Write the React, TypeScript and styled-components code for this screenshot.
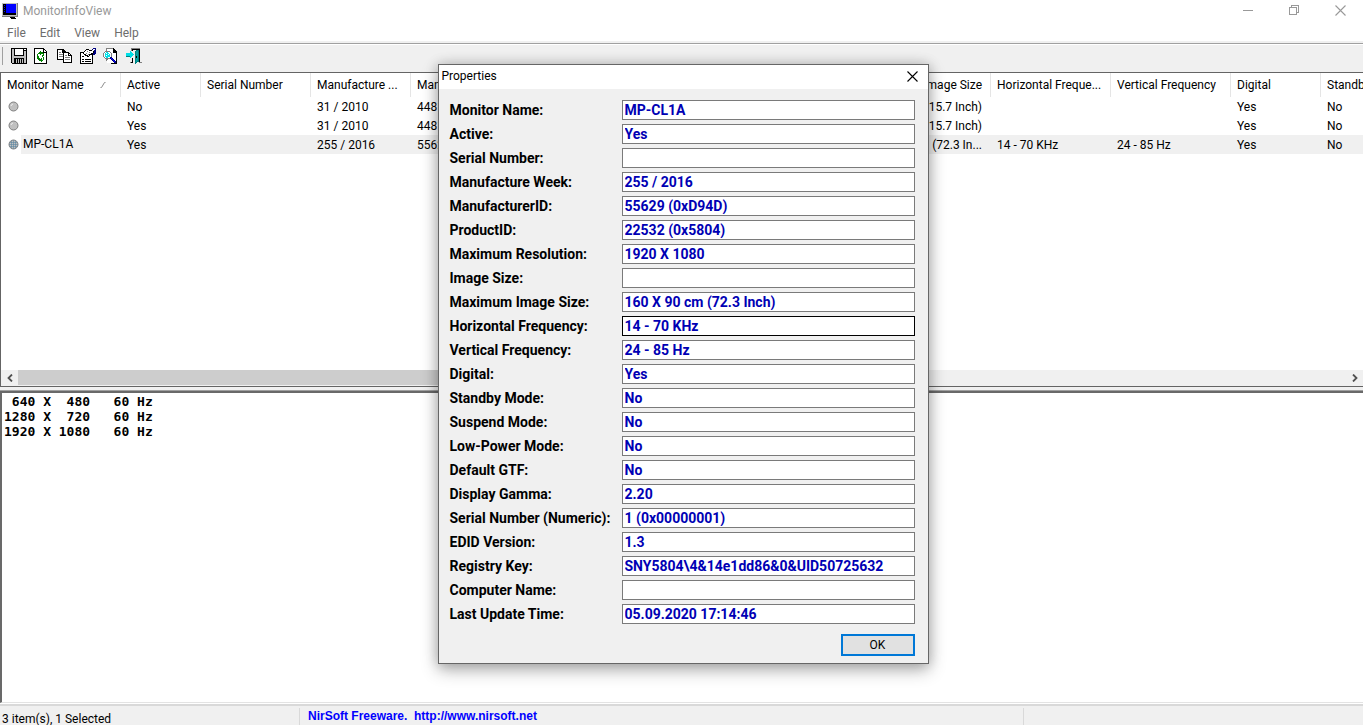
import React from "react";
import styled, { createGlobalStyle } from "styled-components";

const GlobalStyle = createGlobalStyle`
  * { box-sizing: border-box; }
  html, body { margin: 0; height: 100%; }
  #root { height: 100%; }
  body {
    overflow: hidden;
    font-family: Roboto, "Noto Sans", sans-serif;
    font-size: 12px;
    color: #000;
    background: #f0f0f0;
  }
  button, input, textarea { font: inherit; color: inherit; border-radius: 0; }
`;

const Window = styled.div`
  position: relative;
  display: flex;
  flex-direction: column;
  height: 100vh;
  overflow: hidden;
`;

const TitleBar = styled.header`
  display: flex;
  align-items: center;
  height: 22px;
  padding-left: 2px;
  background: #fff;
  color: #999;
`;

const WindowTitle = styled.h1`
  flex: 1;
  margin: 0 0 0 5px;
  font-size: 12px;
  font-weight: 400;
`;

const CaptionButton = styled.button`
  display: grid;
  place-items: center;
  width: 46px;
  height: 20px;
  padding: 0;
  border: 0;
  background: none;
  align-self: flex-start;
`;

const MenuBar = styled.nav`
  display: flex;
  height: 22px;
  background: #fff;
  border-bottom: 1px solid #a0a0a0;
  box-shadow: inset 0 -2px #f0f0f0;
`;

const MenuItem = styled.button`
  padding: 0 7px;
  height: 21px;
  border: 0;
  background: none;
  color: #6d6d6d;
`;

const ToolBar = styled.div`
  display: flex;
  align-items: flex-start;
  height: 28px;
  padding: 0 2px;
  border-top: 1px solid #fff;
  background: #f0f0f0;
`;

const Grip = styled.span`
  width: 1px;
  height: 18px;
  margin: 2px 4px 0 0;
  background: #a0a0a0;
`;

const ToolButton = styled.button`
  display: grid;
  place-items: center;
  width: 23px;
  height: 22px;
  padding: 0;
  border: 0;
  background: none;
`;

const ListPane = styled.section`
  display: flex;
  flex-direction: column;
  height: 315px;
  flex-shrink: 0;
  overflow: hidden;
  background: #fff;
  border: 1px solid #646464;
  border-right: 0;
`;

const ListViewport = styled.div`
  flex: 1;
  overflow: hidden;
`;

const ListTable = styled.table`
  table-layout: fixed;
  width: 1409px;
  border-collapse: separate;
  border-spacing: 0;
`;

const HeadCell = styled.th<{ $end?: boolean }>`
  height: 24px;
  padding: 0 ${(p) => (p.$end ? 8 : 0)}px 0 6px;
  border-right: 1px solid #e5e5e5;
  font-weight: 400;
  text-align: ${(p) => (p.$end ? "right" : "left")};
  white-space: nowrap;
  overflow: hidden;
`;

const HeadContent = styled.span`
  display: flex;
  align-items: center;
  justify-content: space-between;
  padding-right: 14px;
`;

const Cell = styled.td<{ $selected: boolean; $end: boolean }>`
  height: 19px;
  padding: 0 ${(p) => (p.$end ? 9 : 0)}px 0 6px;
  text-align: ${(p) => (p.$end ? "right" : "left")};
  white-space: nowrap;
  overflow: hidden;
  background: ${(p) => (p.$selected ? "#f0f0f0" : "#fff")};
`;

const NameCell = styled.td`
  height: 19px;
  padding: 0;
`;

const NameContent = styled.div`
  display: flex;
  align-items: center;
  padding-left: 7px;
`;

const NameText = styled.span<{ $selected: boolean }>`
  flex: 1;
  height: 19px;
  line-height: 19px;
  margin-left: 2px;
  padding-left: 2px;
  background: ${(p) => (p.$selected ? "#f0f0f0" : "#fff")};
`;

const ScrollBar = styled.div`
  display: flex;
  height: 16px;
  background: #f0f0f0;
`;

const ScrollArrow = styled.button`
  display: grid;
  place-items: center;
  width: 17px;
  height: 15px;
  padding: 0;
  border: 0;
  background: none;
`;

const ScrollTrack = styled.div`
  flex: 1;
`;

const ScrollThumb = styled.div`
  width: 60%;
  height: 15px;
  background: #cdcdcd;
`;

const Splitter = styled.div`
  height: 4px;
  flex-shrink: 0;
  background: #f0f0f0;
`;

const ModesPane = styled.textarea`
  flex: 1;
  display: block;
  width: 100%;
  min-height: 0;
  margin: 0;
  padding: 1px 2px 0;
  border: solid;
  border-width: 2px 0 1px 2px;
  border-color: #696969 #e3e3e3 #e3e3e3 #696969;
  box-shadow: 0 -1px #a0a0a0;
  outline: 0;
  resize: none;
  overflow: hidden;
  background: #fff;
  font-family: "DejaVu Sans Mono", monospace;
  font-size: 13px;
  font-weight: 700;
  line-height: 15px;
`;

const StatusBar = styled.footer`
  display: flex;
  height: 22px;
  flex-shrink: 0;
  padding-top: 1px;
  border-top: 1px solid #fff;
  background: #f0f0f0;
  box-shadow: inset 0 2px #d9d9d9;
`;

const StatusPart = styled.div<{ $width?: number }>`
  flex: ${(p) => (p.$width ? `0 0 ${p.$width}px` : "1")};
  margin-top: 3px;
  padding: 2px 2px 0;
  line-height: 18px;
  border-right: 1px solid #d9d9d9;
  white-space: pre;
  &:last-child { border-right: 0; }
`;

const HomeLink = styled.a`
  display: block;
  padding-left: 6px;
  line-height: 12px;
  color: #0000ff;
  font-family: "Liberation Sans", Arial, sans-serif;
  font-size: 12px;
  font-weight: 700;
  text-decoration: none;
`;

const DialogLayer = styled.div`
  position: absolute;
  inset: 0;
  display: grid;
  place-items: center;
  padding: 3px 0 0 3px;
`;

const Dialog = styled.form`
  width: 491px;
  background: #f0f0f0;
  border: 1px solid #666;
  box-shadow: 0 6px 16px rgba(0, 0, 0, 0.3), 0 0 12px rgba(0, 0, 0, 0.18);
`;

const DialogTitle = styled.div`
  display: flex;
  align-items: center;
  justify-content: space-between;
  height: 24px;
  padding: 0 0 2px 3px;
  background: #fff;
`;

const DialogClose = styled.button`
  display: grid;
  place-items: center;
  width: 30px;
  height: 22px;
  padding: 0;
  border: 0;
  background: none;
`;

const DialogBody = styled.div`
  display: flex;
  flex-direction: column;
  gap: 4px;
  padding: 11px 13px 7px 11px;
`;

const Field = styled.label`
  display: grid;
  grid-template-columns: 172px 1fr;
  align-items: center;
  height: 20px;
  font-family: Roboto, "Liberation Sans", sans-serif;
  font-size: 14px;
  font-weight: 700;
  white-space: nowrap;
`;

const FieldInput = styled.input<{ $current: boolean }>`
  width: 100%;
  height: 20px;
  padding: 0 2px;
  border: 1px solid ${(p) => (p.$current ? "#000" : "#7a7a7a")};
  outline: 0;
  background: #fff;
  color: #0000b4;
`;

const OkButton = styled.button`
  align-self: flex-end;
  width: 74px;
  height: 22px;
  margin-top: 6px;
  padding: 0;
  border: 2px solid #0078d7;
  background: #e1e1e1;
  font-family: Roboto, "Liberation Sans", sans-serif;
  font-size: 12px;
`;

const columns = [
  { title: "Monitor Name", width: 120 },
  { title: "Active", width: 80 },
  { title: "Serial Number", width: 110 },
  { title: "Manufacture ...", width: 100 },
  { title: "Man", width: 120 },
  { title: "", width: 340 },
  { title: "mage Size", width: 120 },
  { title: "Horizontal Freque...", width: 120 },
  { title: "Vertical Frequency", width: 120 },
  { title: "Digital", width: 90 },
  { title: "Standb", width: 89 },
];

const SIZE_COLUMN = 6;

const monitors = [
  { name: "", cells: ["No", "", "31 / 2010", "4481", "", "(15.7 Inch)", "", "", "Yes", "No"] },
  { name: "", cells: ["Yes", "", "31 / 2010", "4481", "", "(15.7 Inch)", "", "", "Yes", "No"] },
  {
    name: "MP-CL1A",
    cells: ["Yes", "", "255 / 2016", "5562", "", "(72.3 In...", "14 - 70 KHz", "24 - 85 Hz", "Yes", "No"],
  },
];

const fields: [string, string][] = [
  ["Monitor Name:", "MP-CL1A"],
  ["Active:", "Yes"],
  ["Serial Number:", ""],
  ["Manufacture Week:", "255 / 2016"],
  ["ManufacturerID:", "55629 (0xD94D)"],
  ["ProductID:", "22532 (0x5804)"],
  ["Maximum Resolution:", "1920 X 1080"],
  ["Image Size:", ""],
  ["Maximum Image Size:", "160 X 90 cm (72.3 Inch)"],
  ["Horizontal Frequency:", "14 - 70 KHz"],
  ["Vertical Frequency:", "24 - 85 Hz"],
  ["Digital:", "Yes"],
  ["Standby Mode:", "No"],
  ["Suspend Mode:", "No"],
  ["Low-Power Mode:", "No"],
  ["Default GTF:", "No"],
  ["Display Gamma:", "2.20"],
  ["Serial Number (Numeric):", "1 (0x00000001)"],
  ["EDID Version:", "1.3"],
  ["Registry Key:", "SNY5804\\4&14e1dd86&0&UID50725632"],
  ["Computer Name:", ""],
  ["Last Update Time:", "05.09.2020 17:14:46"],
];

const modes = " 640 X  480   60 Hz\n1280 X  720   60 Hz\n1920 X 1080   60 Hz";

const Icon = ({ children, size = 16 }: { children: React.ReactNode; size?: number }) => (
  <svg width={size} height={size} viewBox={`0 0 ${size} ${size}`} shapeRendering="crispEdges" aria-hidden="true">
    {children}
  </svg>
);

const AppIcon = () => (
  <Icon>
    <path fill="#c0c0c0" d="M0 0h16v14H0z" />
    <path fill="#808080" d="M15 0h1v14H0v-1h15z" />
    <path fill="#000" d="M1 1h13v11H1zM9 14h4v1h1v1H9zM8 14h1v1H8z" />
    <path fill="#0000ff" d="M4 1h10v9H4zM2 2h1v1H2zM2 4h1v1H2zM2 6h1v1H2zM2 8h1v1H2z" />
  </Icon>
);

const SaveIcon = () => (
  <Icon>
    <path fill="#000" d="M0 0h16v16H1v-1H0z" />
    <path fill="#c0c0c0" d="M1 1h2v7h10V3h2v12h-2v-5H3v5H1z" />
    <path fill="#fff" d="M4 1h8v6H4zM13 1h2v1h-2z" />
    <path fill="#c0c0c0" d="M5 11h7v4H5z" />
    <path fill="#000" d="M6 11h1v4H6zM8 11h1v4H8zM10 11h1v4h-1z" />
  </Icon>
);

const RefreshIcon = () => (
  <Icon>
    <path fill="#000" d="M0 0h10v1h1v1h1v1h1v13H0z" />
    <path fill="#fff" d="M1 1h8v4h3v10H1z" />
    <path fill="#fff" d="M10 2v2h2V3h-1V2z" />
    <path
      fill="#008000"
      d="M6 3h1v1h2v1h1v3H9v1H8V7h1V6H7v1H6V6H5V4h1zM4 5h1v1H4zM3 6h1v3H3zM9 9h1v3H9zM8 12h1v1H8zM4 8h1v2h1v1h1v-1h1v4H7v-1H5v-1H4v-1H3V9h1z"
    />
  </Icon>
);

const CopyIcon = () => (
  <Icon>
    <path fill="#000" d="M0 1h6l3 3v8H0z" />
    <path fill="#fff" d="M1 2h4v3h3v6H1z" />
    <path fill="#808080" d="M2 4h2v1H2zM2 6h4v1H2zM2 8h4v1H2z" />
    <path fill="#000" d="M6 4h6v1h1v1h1v1h1v8H6z" />
    <path fill="#fff" d="M7 5h4v3h3v6H7z" />
    <path fill="#fff" d="M12 6v1h1V6z" />
    <path fill="#808080" d="M8 7h2v1H8zM8 9h5v1H8zM8 11h5v1H8z" />
  </Icon>
);

const PropertiesIcon = () => (
  <Icon>
    <path fill="#000" d="M0 4h13v12H0z" />
    <path fill="#fff" d="M1 5h11v10H1z" />
    <path fill="#000" d="M2 8h2v1H2zM2 11h2v1H2zM5 11h6v1H5zM2 13h2v1H2zM5 13h6v1H5z" />
    <path fill="#000" d="M6 1h3v1h3v1h2v3h-2v1h-2v1H9v1H7V8H5V7H4V6H3V4h1V3h1V2h1z" />
    <path fill="#fff" d="M6 2h3v1h4v2h-2v1H9v2H8V7H6V6H4V4h1V3h1z" />
    <path fill="#808080" d="M7 3h1v1H7zM9 4h1v1H9zM6 5h1v1H6zM8 6h1v1H8z" />
    <path fill="#000080" d="M12 1h1V0h3v6h-1v1h-2V5h1V2h-2z" />
    <path fill="#fff" d="M13 1h2v1h-2z" />
  </Icon>
);

const FindIcon = () => (
  <Icon>
    <path fill="#808080" d="M3 0h8v1H4v12H3z" />
    <path fill="#fff" d="M4 1h7v3h3v11H4z" />
    <path fill="#000" d="M10 0h1v1h1v1h1v1h1v13H8v-1h5V5h-3z" />
    <circle cx="4.5" cy="7" r="4" fill="#fff" stroke="#808080" />
    <path fill="#00e0e8" d="M3 4h2v1h1v1h1v3H5v1H3V9H2V5h1z" />
    <path fill="#fff" d="M3 5h1v1H3zM5 6h1v1H5zM3 7h1v1H3z" />
    <path fill="#000080" d="M7 9h2v1h1v1h1v1h1v1h1v2h-2v-1h-1v-1H9v-1H8v-1H7z" />
    <path fill="#0000ff" d="M8 10h1v1h1v1h1v1h1v1h-1v-1h-1v-1H9v-1H8z" />
  </Icon>
);

const ExitIcon = () => (
  <Icon>
    <path fill="#808080" d="M5 0h9v14h2v1h-3V1H6v2H5zM4 14h2v1H4z" />
    <path fill="#000" d="M6 1h8v13h-1V2H7v1H6zM6 10h1v5H5v-1h1z" />
    <path fill="#008080" d="M9 3h1V2h3v12h-2v1h-1v1H9z" />
    <path fill="#00a0a0" d="M10 3h2v10h-1v1h-1z" />
    <path fill="#000" d="M10 8h1v2h-1z" />
    <path fill="#00e0e8" d="M0 5h4V3h1v1h1v1h1v1h1v1H7v1H6v1H5v1H4V8H0z" />
    <path fill="#008080" d="M0 8h4v1H0z" />
  </Icon>
);

const CloseGlyph = ({ color }: { color: string }) => (
  <svg width="11" height="11" viewBox="0 0 11 11" aria-hidden="true">
    <path d="M0.5 0.5l10 10M10.5 0.5l-10 10" stroke={color} strokeWidth="1.1" fill="none" />
  </svg>
);

const MonitorDot = ({ active }: { active: boolean }) => (
  <svg width="11" height="11" viewBox="0 0 11 11" aria-hidden="true">
    <circle cx="5.5" cy="5.5" r="4.5" fill="#c0c0c0" stroke="#808080" />
    {active ? (
      <path d="M1.5 3.5h8M1 5.5h9M1.5 7.5h8M3.5 1.5v8M5.5 1v9M7.5 1.5v8" stroke="#5a84a0" strokeWidth="0.6" />
    ) : (
      <path d="M3 5a2.5 2.5 0 0 1 2-2" stroke="#f0f0f0" fill="none" />
    )}
  </svg>
);

const tools: [string, () => React.ReactElement][] = [
  ["Save Selected Items", SaveIcon],
  ["Refresh", RefreshIcon],
  ["Copy Selected Items", CopyIcon],
  ["Properties", PropertiesIcon],
  ["Find", FindIcon],
  ["Exit", ExitIcon],
];

export default function App() {
  return (
    <Window>
      <GlobalStyle />
      <TitleBar>
        <AppIcon />
        <WindowTitle>MonitorInfoView</WindowTitle>
        <CaptionButton aria-label="Minimize">
          <Icon size={10}><path fill="#999" d="M0 5h10v1H0z" /></Icon>
        </CaptionButton>
        <CaptionButton aria-label="Restore">
          <Icon size={10}>
            <path fill="#999" d="M0 2h8v8H0zM1 3v6h6V3zM2 0h8v8H8V7h1V1H3v1H2z" fillRule="evenodd" />
          </Icon>
        </CaptionButton>
        <CaptionButton aria-label="Close"><CloseGlyph color="#999" /></CaptionButton>
      </TitleBar>
      <MenuBar>
        {["File", "Edit", "View", "Help"].map((item) => (
          <MenuItem key={item}>{item}</MenuItem>
        ))}
      </MenuBar>
      <ToolBar role="toolbar">
        <Grip />
        {tools.map(([label, Glyph]) => (
          <ToolButton key={label} aria-label={label}><Glyph /></ToolButton>
        ))}
      </ToolBar>
      <ListPane>
        <ListViewport>
          <ListTable>
            <colgroup>
              {columns.map((c, i) => <col key={i} style={{ width: c.width }} />)}
            </colgroup>
            <thead>
              <tr>
                {columns.map((c, i) => (
                  <HeadCell key={i} scope="col" $end={i === SIZE_COLUMN}>
                    {i === 0 ? (
                      <HeadContent>
                        {c.title}
                        <svg width="6" height="6" viewBox="0 0 6 6" aria-hidden="true">
                          <path d="M0.5 5.5h1l3-5h1" stroke="#8c8c8c" fill="none" />
                        </svg>
                      </HeadContent>
                    ) : c.title}
                  </HeadCell>
                ))}
              </tr>
            </thead>
            <tbody>
              {monitors.map((m, r) => {
                const selected = m.name !== "";
                return (
                  <tr key={r}>
                    <NameCell>
                      <NameContent>
                        <MonitorDot active={selected} />
                        <NameText $selected={selected}>{m.name}</NameText>
                      </NameContent>
                    </NameCell>
                    {m.cells.map((value, i) => (
                      <Cell key={i} $selected={selected} $end={i + 1 === SIZE_COLUMN}>{value}</Cell>
                    ))}
                  </tr>
                );
              })}
            </tbody>
          </ListTable>
        </ListViewport>
        <ScrollBar>
          <ScrollArrow aria-label="Scroll left">
            <svg width="6" height="8" viewBox="0 0 6 8" aria-hidden="true">
              <path d="M5 0.5L1.5 4L5 7.5" stroke="#505050" strokeWidth="1.8" fill="none" />
            </svg>
          </ScrollArrow>
          <ScrollTrack><ScrollThumb /></ScrollTrack>
          <ScrollArrow aria-label="Scroll right">
            <svg width="6" height="8" viewBox="0 0 6 8" aria-hidden="true">
              <path d="M1 0.5L4.5 4L1 7.5" stroke="#505050" strokeWidth="1.8" fill="none" />
            </svg>
          </ScrollArrow>
        </ScrollBar>
      </ListPane>
      <Splitter />
      <ModesPane readOnly aria-label="Supported modes" defaultValue={modes} />
      <StatusBar>
        <StatusPart $width={300}>3 item(s), 1 Selected</StatusPart>
        <StatusPart>
          <HomeLink href="http://www.nirsoft.net">{"NirSoft Freeware.  http://www.nirsoft.net"}</HomeLink>
        </StatusPart>
        <StatusPart $width={339} />
      </StatusBar>
      <DialogLayer>
        <Dialog role="dialog" aria-label="Properties" onSubmit={(e) => e.preventDefault()}>
          <DialogTitle>
            Properties
            <DialogClose type="button" aria-label="Close"><CloseGlyph color="#000" /></DialogClose>
          </DialogTitle>
          <DialogBody>
            {fields.map(([label, value]) => (
              <Field key={label}>
                {label}
                <FieldInput readOnly defaultValue={value} $current={label === "Horizontal Frequency:"} />
              </Field>
            ))}
            <OkButton>OK</OkButton>
          </DialogBody>
        </Dialog>
      </DialogLayer>
    </Window>
  );
}
